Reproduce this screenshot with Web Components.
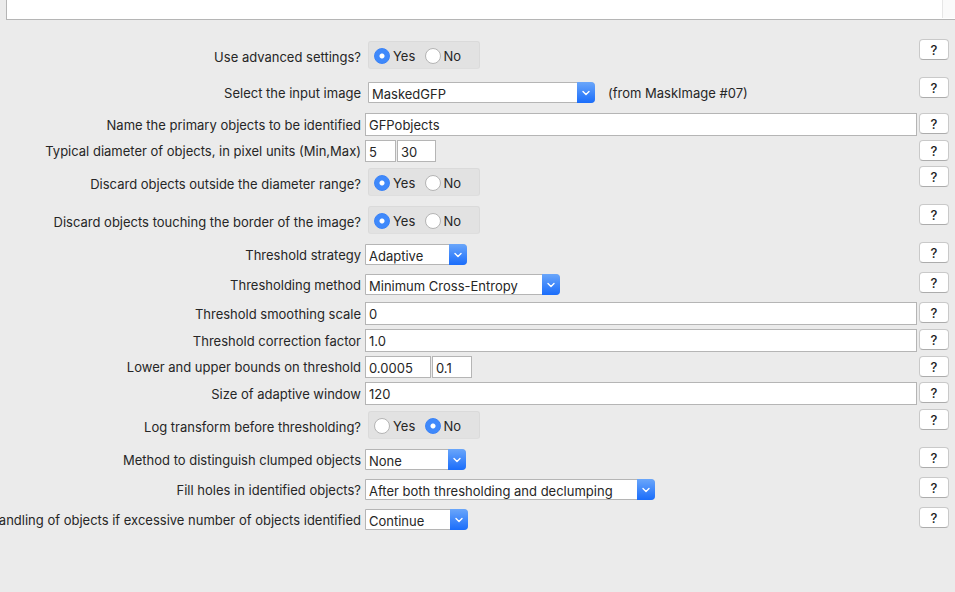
<!DOCTYPE html>
<html lang="en">
<head>
<meta charset="utf-8">
<title>Module settings</title>
<style>
  body { margin: 0; background: #ebebeb; color: #262626; font: 13px/16px Inter, "Liberation Sans", sans-serif; overflow: hidden; }
</style>
</head>
<body>
<settings-page>
  <notes-pane slot="notes"></notes-pane>
  <radio-setting label="Use advanced settings?" value="Yes"></radio-setting>
  <choice-setting class="roomy" label="Select the input image" value="MaskedGFP" note="(from MaskImage #07)" style="--w:227px"></choice-setting>
  <text-setting label="Name the primary objects to be identified" values="GFPobjects"></text-setting>
  <text-setting class="range" label="Typical diameter of objects, in pixel units (Min,Max)" values="5|30" widths="31|39"></text-setting>
  <radio-setting label="Discard objects outside the diameter range?" value="Yes"></radio-setting>
  <radio-setting label="Discard objects touching the border of the image?" value="Yes"></radio-setting>
  <choice-setting label="Threshold strategy" value="Adaptive" style="--w:102px"></choice-setting>
  <choice-setting label="Thresholding method" value="Minimum Cross-Entropy" style="--w:195px"></choice-setting>
  <text-setting label="Threshold smoothing scale" values="0"></text-setting>
  <text-setting label="Threshold correction factor" values="1.0"></text-setting>
  <text-setting class="range" label="Lower and upper bounds on threshold" values="0.0005|0.1" widths="66|40"></text-setting>
  <text-setting label="Size of adaptive window" values="120"></text-setting>
  <radio-setting label="Log transform before thresholding?" value="No"></radio-setting>
  <choice-setting label="Method to distinguish clumped objects" value="None" style="--w:101px"></choice-setting>
  <choice-setting label="Fill holes in identified objects?" value="After both thresholding and declumping" style="--w:290px"></choice-setting>
  <choice-setting label="Handling of objects if excessive number of objects identified" value="Continue" style="--w:103px"></choice-setting>
</settings-page>

<script>
customElements.define('settings-page', class extends HTMLElement {
  constructor() {
    super();
    this.attachShadow({ mode: 'open' }).innerHTML = `
      <style>
        :host { display: block; }
        form { display: flex; flex-direction: column; padding: 19px 6px 0 0; }
      </style>
      <slot name="notes"></slot>
      <form><slot></slot></form>`;
  }
});

customElements.define('notes-pane', class extends HTMLElement {
  constructor() {
    super();
    this.attachShadow({ mode: 'open' }).innerHTML = `
      <style>
        :host { display: flex; justify-content: flex-end; height: 19px; margin-left: 6px; background: #fff;
                border: solid #b5b5b5; border-width: 0 0 1px 1px; }
        .track { width: 12px; margin-bottom: 1px; background: #fafafa; border-left: 1px solid #e6e6e6; }
      </style>
      <div class="track"></div>`;
  }
});

customElements.define('help-button', class extends HTMLElement {
  constructor() {
    super();
    this.attachShadow({ mode: 'open' }).innerHTML = `
      <style>
        :host { display: block; }
        button { display: block; box-sizing: border-box; width: 100%; height: 21px; padding: 0; color: #1c1c1c;
                 font: inherit; font-weight: 500; line-height: 18px; background: #fff;
                 border: 1px solid #c9c9c9; border-bottom-color: #acacac; border-radius: 4px; }
      </style>
      <button type="button" title="Help">?</button>`;
  }
});

class SettingRow extends HTMLElement {
  connectedCallback() {
    if (this.shadowRoot) return;
    this.attachShadow({ mode: 'open' }).innerHTML = `
      <style>
        :host { display: grid; grid-template-columns: 361px minmax(0, 1fr) 30px; align-items: start; }
        .name { display: flex; justify-content: flex-end; white-space: nowrap; }
        .control { display: flex; padding: 0 2px 0 4px; }
        ${this.css()}
      </style>
      ${this.nameTag()}
      <div class="control">${this.control()}</div>
      <help-button></help-button>`;
  }
  nameTag() { return `<label class="name" for="field">${this.getAttribute('label')}</label>`; }
}

customElements.define('radio-setting', class extends SettingRow {
  nameTag() { return `<span class="name" id="name">${this.getAttribute('label')}</span>`; }
  css() {
    return `
      :host { min-height: 38px; }
      .name { padding-top: 10px; }
      .control { padding: 2px 2px 0 7px; }
      .group { display: flex; gap: 1px; box-sizing: border-box; width: 112px; height: 28px; padding: 0 5px;
               background: #e2e2e2; border: 1px solid #dadada; border-bottom-color: #dedede; border-radius: 3px; }
      .group label { display: flex; align-items: center; gap: 3px; width: 50px; padding-top: 2px; }
      .group label { width: 50px; }
      input { appearance: none; flex: none; box-sizing: border-box; width: 16px; height: 16px; margin: 0 0 1px;
              border: 1px solid #b4b4b4; border-radius: 50%; background: #fff; }
      input:checked { border-color: #3a82f7; background: radial-gradient(circle, #fff 2px, #3f89fb 3px); }`;
  }
  control() {
    return `<div class="group" role="radiogroup" aria-labelledby="name">${['Yes', 'No'].map(v =>
      `<label><input type="radio" name="answer" value="${v}"${v === this.getAttribute('value') ? ' checked' : ''}>${v}</label>`).join('')}</div>`;
  }
});

customElements.define('choice-setting', class extends SettingRow {
  css() {
    return `
      :host { min-height: 30px; }
      .name { padding-top: 5px; }
      .control { padding-top: 2px; }
      :host(.roomy) { min-height: 36px; }
      :host(.roomy) .name { padding-top: 8px; }
      :host(.roomy) .control { padding: 5px 2px 0 7px; }
      .combo { display: grid; grid-template-columns: minmax(0, 1fr) 18px; width: var(--w); height: 21px; }
      select { appearance: none; grid-area: 1 / 1 / 2 / 3; box-sizing: border-box; width: 100%; height: 21px; margin: 0;
               padding: 2px 18px 0 3px; color: inherit; font: inherit; background: #fff;
               border: 1px solid #b5b5b5; border-radius: 0 4px 4px 0; }
      svg { grid-area: 1 / 2; z-index: 1; width: 18px; height: 21px; pointer-events: none;
            background: linear-gradient(#6aa6fa, #1a6dfb); border-radius: 0 4px 4px 0; }
      output { padding: 3px 0 0 13px; white-space: nowrap; }`;
  }
  control() {
    const note = this.getAttribute('note');
    return `<div class="combo"><select id="field"><option>${this.getAttribute('value')}</option></select>
      <svg viewBox="0 0 18 21" aria-hidden="true"><path d="M6 9.5l3 3 3-3" fill="none" stroke="#fff" stroke-width="1.4" stroke-linecap="round" stroke-linejoin="round"/></svg></div>
      ${note ? `<output for="field">${note}</output>` : ''}`;
  }
});

customElements.define('text-setting', class extends SettingRow {
  css() {
    return `
      :host { min-height: 27px; }
      :host(.range) { min-height: 26px; }
      .name { padding-top: 4px; }
      :host(.range) .name { padding-top: 3px; }
      .control { gap: 1px; }
      input { box-sizing: border-box; width: 100%; height: 23px; margin: 0; padding: 0 3px; color: inherit;
              font: inherit; background: #fff; border: 1px solid #b5b5b5; border-radius: 0; }
      :host(.range) input { height: 22px; padding-top: 2px; }`;
  }
  control() {
    const widths = (this.getAttribute('widths') || '').split('|');
    return this.getAttribute('values').split('|').map((v, i) =>
      `<input type="text" value="${v}" ${i ? `aria-label="${this.getAttribute('label')}, upper"` : 'id="field"'}${widths[i] ? ` style="width:${widths[i]}px"` : ''}>`).join('');
  }
});
</script>
</body>
</html>
